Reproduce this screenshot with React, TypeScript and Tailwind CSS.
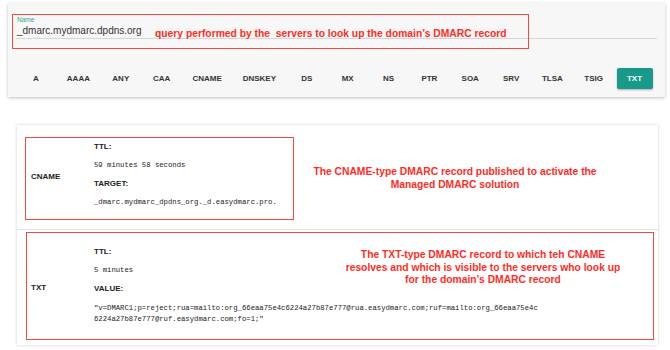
const types = ["A", "AAAA", "ANY", "CAA", "CNAME", "DNSKEY", "DS", "MX", "NS", "PTR", "SOA", "SRV", "TLSA", "TSIG", "TXT"];

function Field({ label, children }: { label: string; children: React.ReactNode }) {
  return (
    <>
      <div className="h-[18.5px] flex items-center text-[8px] font-bold text-[#222]">{label}</div>
      {children}
    </>
  );
}

function Mono({ children }: { children: React.ReactNode }) {
  return (
    <div className="h-[18.5px] flex items-center text-[7.25px] text-[#222] font-['Liberation_Mono','DejaVu_Sans_Mono',monospace]">
      {children}
    </div>
  );
}

export default function App() {
  return (
    <main className="relative w-[670px] h-[350px] overflow-hidden bg-white font-['Liberation_Sans',Arial,sans-serif] text-[#222]">
      {/* search card */}
      <section className="ml-[8px] mt-[3px] w-[657px] h-[94px] bg-[#f7f7f7] shadow-[0_1px_3px_rgba(0,0,0,0.25)] pl-[8px] pr-[8px] pt-[13px]">
        <div className="border-b border-[#d6d6d6] h-[23px] pl-[1px]">
          <div className="text-[6.5px] leading-[8px] text-[#26a69a]">Name</div>
          <div className="text-[10px] leading-[13px] text-[#333]">_dmarc.mydmarc.dpdns.org</div>
        </div>
        <div className="flex gap-[4.85px] pl-[2px] mt-[29px]">
          {types.map((t) => (
            <button
              key={t}
              className={
                t === "TXT"
                  ? "min-w-[36px] h-[21px] px-2 rounded-[2px] bg-[#179a89] text-white text-[8px] font-bold shadow-[0_1px_2px_rgba(0,0,0,0.3)]"
                  : "min-w-[36px] h-[21px] px-2 text-[8px] font-bold text-[#333]"
              }
            >
              {t}
            </button>
          ))}
        </div>
      </section>

      {/* records card */}
      <section className="ml-[17px] mt-[28px] w-[641px] bg-white shadow-[0_0_3px_rgba(0,0,0,0.2)]">
        <div className="flex items-center h-[104px] pl-[14px]">
          <div className="w-[63px] text-[8px] font-bold">CNAME</div>
          <div className="self-start pt-[13px]">
            <Field label="TTL:">
              <Mono>59 minutes 58 seconds</Mono>
            </Field>
            <Field label="TARGET:">
              <Mono>_dmarc.mydmarc_dpdns_org._d.easydmarc.pro.</Mono>
            </Field>
          </div>
        </div>
        <div className="flex items-center h-[116px] pl-[14px] border-t border-[#e4e4e4]">
          <div className="w-[63px] text-[8px] font-bold">TXT</div>
          <div className="self-start pt-[13px]">
            <Field label="TTL:">
              <Mono>5 minutes</Mono>
            </Field>
            <Field label="VALUE:">
              <div className="pt-[4px] text-[7.25px] leading-[11px] text-[#222] font-['Liberation_Mono','DejaVu_Sans_Mono',monospace]">
                <div>"v=DMARC1;p=reject;rua=mailto:org_66eaa75e4c6224a27b87e777@rua.easydmarc.com;ruf=mailto:org_66eaa75e4c</div>
                <div>6224a27b87e777@ruf.easydmarc.com;fo=1;"</div>
              </div>
            </Field>
          </div>
        </div>
      </section>

      {/* annotations */}
      <div className="absolute left-[12px] top-[14px] w-[517px] h-[35px] border-[1.5px] border-[#f04a3e]" />
      <div className="absolute left-[155px] top-[26px] text-[10.3px] font-bold text-[#ff2d1f] whitespace-pre">
        query performed by the  servers to look up the domain’s DMARC record
      </div>

      <div className="absolute left-[25px] top-[137px] w-[269px] h-[83px] border-[1.5px] border-[#f04a3e]" />
      <div className="absolute left-[305px] top-[166px] w-[300px] text-center text-[10.3px] leading-[12.5px] font-bold text-[#ff2d1f] whitespace-nowrap">
        The CNAME-type DMARC record published to activate the
        <br />
        Managed DMARC solution
      </div>

      <div className="absolute left-[26px] top-[232px] w-[628px] h-[108px] border-[1.5px] border-[#f04a3e]" />
      <div className="absolute left-[333px] top-[249px] w-[300px] text-center text-[10.3px] leading-[12.5px] font-bold text-[#ff2d1f] whitespace-nowrap">
        The TXT-type DMARC record to which teh CNAME
        <br />
        resolves and which is visible to the servers who look up
        <br />
        for the domain’s DMARC record
      </div>
    </main>
  );
}
